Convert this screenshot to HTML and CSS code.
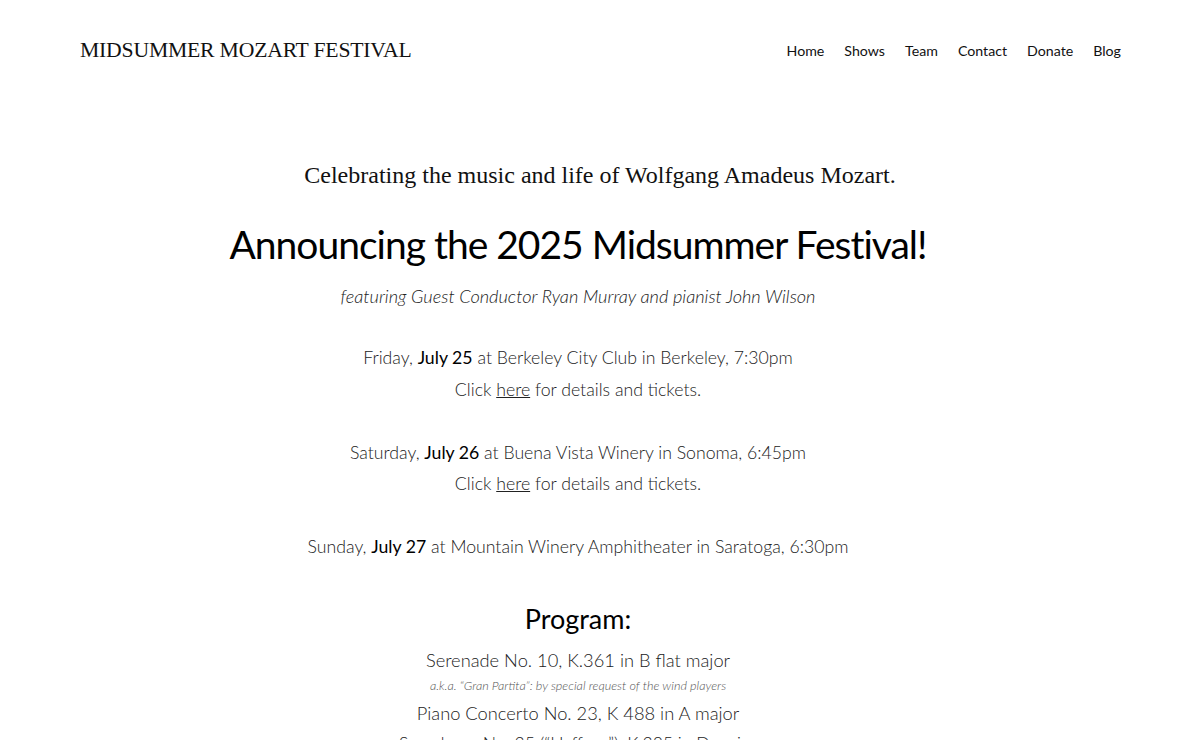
FILE: index.html
```html
<!DOCTYPE html>
<html>
<head>
    <link rel="stylesheet" href="styles.css">
</head>
<body>
    <header class="site-header">
        <div class="logo">MIDSUMMER MOZART FESTIVAL</div>
        <nav class="nav">
            <a href="#">Home</a>
            <a href="#">Shows</a>
            <a href="#">Team</a>
            <a href="#">Contact</a>
            <a href="#">Donate</a>
            <a href="#">Blog</a>
        </nav>
    </header>

    <main class="content">
        <p class="tagline">Celebrating the music and life of Wolfgang Amadeus Mozart.</p>

        <section class="festival">
            <h1>Announcing the 2025 Midsummer Festival!</h1>
            <p class="featuring">featuring Guest Conductor Ryan Murray and pianist John Wilson</p>

            <div class="events">
                <p>Friday, <strong>July 25</strong> at Berkeley City Club in Berkeley, 7:30pm</p>
                <p>Click <a href="#">here</a> for details and tickets.</p>
                <p class="spacer"></p>
                <p>Saturday, <strong>July 26</strong> at Buena Vista Winery in Sonoma, 6:45pm</p>
                <p>Click <a href="#">here</a> for details and tickets.</p>
                <p class="spacer"></p>
                <p>Sunday, <strong>July 27</strong> at Mountain Winery Amphitheater in Saratoga, 6:30pm</p>
            </div>

            <h2>Program:</h2>
            <ul class="program">
                <li>Serenade No. 10, K.361 in B flat major</li>
                <li class="note">a.k.a. “Gran Partita”: by special request of the wind players</li>
                <li>Piano Concerto No. 23, K 488 in A major</li>
                <li class="last">Symphony No. 35 (“Haffner”), K.385 in D major</li>
            </ul>
        </section>
    </main>
</body>
</html>
```

FILE: styles.css
```css
body {
    margin: 0;
    background: #fff;
    color: #000;
    font-family: Lato, "Open Sans", sans-serif;
    overflow: hidden;
}

.site-header {
    display: flex;
    justify-content: space-between;
    align-items: center;
    height: 100px;
    padding: 0 79px 0 80px;
}

.logo {
    font-family: "Liberation Serif", "DejaVu Serif", serif;
    font-size: 21.7px;
    letter-spacing: -0.2px;
    color: #111;
}

.nav {
    display: flex;
    gap: 20px;
}

.nav a {
    font-size: 14.2px;
    color: #111;
    text-decoration: none;
}

.content {
    text-align: center;
}

.tagline {
    font-family: "Liberation Serif", "DejaVu Serif", serif;
    font-size: 24px;
    margin: 62px 0 0;
    color: #111;
}

.festival {
    margin-right: 44px;
}

h1 {
    font-weight: 400;
    font-size: 39px;
    margin: 32px 0 0;
    letter-spacing: -1px;
}

.featuring {
    font-style: italic;
    font-weight: 300;
    font-size: 18.2px;
    margin: 18px 0 0;
    color: #222;
}

.events {
    margin-top: 35px;
    font-weight: 300;
    font-size: 17.7px;
    line-height: 31.5px;
    color: #222;
}

.events p {
    margin: 0;
}

.events .spacer {
    height: 31.5px;
}

.events strong {
    font-weight: 400;
    color: #000;
}

.events a {
    color: inherit;
}

h2 {
    font-weight: 400;
    font-size: 27px;
    margin: 39px 0 0;
}

.program {
    list-style: none;
    padding: 0;
    margin: 12px 0 0;
    font-weight: 300;
    font-size: 18.3px;
    line-height: 26.5px;
    color: #222;
}

.program .note {
    font-style: italic;
    font-size: 12.6px;
    color: #555;
}

.program .last {
    margin-top: 5px;
    font-size: 17.6px;
}
```
